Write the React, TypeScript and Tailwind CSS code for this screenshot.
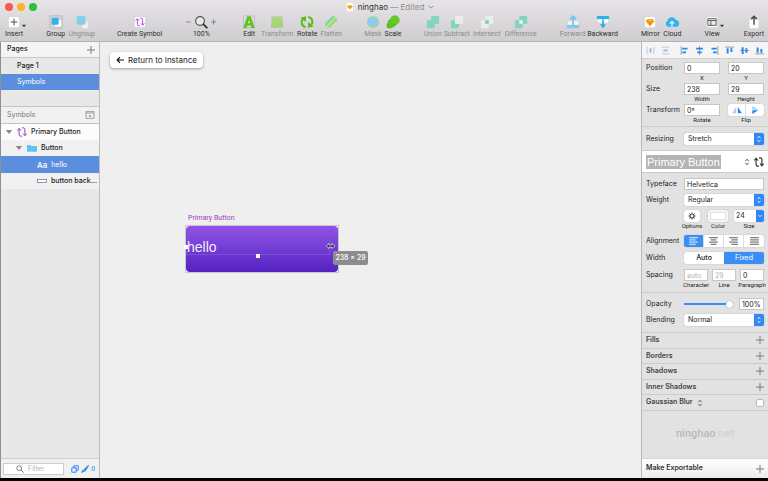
import type { ReactNode } from "react";

type Tool = { name: string; width: string; icon: ReactNode; muted?: boolean };

const swap = (
  <>
    <path d="M4.500 4.500V11q0 2 2 2H8M2.300 6.200l2.200-2.700 2.200 2.700" />
    <path d="M11.500 11.500V5q0-2-2-2H8M9.300 9.800l2.200 2.700 2.200-2.700" />
  </>
);

const TileIcon = ({ children }: { children: ReactNode }) => (
  <svg viewBox="0 0 16 16" className="h-3 w-3">
    <rect x="0.500" y="0.500" width="15" height="15" rx="2.500" fill="#fff" stroke="#cfcdd0" />
    {children}
  </svg>
);

const InsertIcon = () => (
  <div className="relative">
    <TileIcon>
      <path d="M8 3.500v9M3.500 8h9" stroke="#4a4a4a" strokeWidth="1.300" />
    </TileIcon>
    <svg viewBox="0 0 8 5" className="absolute top-2 left-3.5 h-1 w-1">
      <path d="M0 0h8L4 5z" fill="#333" />
    </svg>
  </div>
);

const GroupIcon = () => (
  <svg viewBox="0 0 16 16" className="h-3.5 w-3.5">
    <rect x="1" y="1" width="14" height="14" fill="#d6d4d6" stroke="#b0aeb1" strokeWidth="0.700" />
    <rect x="7" y="6" width="7" height="7" rx="1" fill="#fff" />
    <rect x="3" y="3" width="8" height="8" rx="1" fill="#35b1ea" />
  </svg>
);

const UngroupIcon = () => (
  <svg viewBox="0 0 16 16" className="h-3.5 w-3.5">
    <rect x="8" y="8" width="7" height="7" rx="1" fill="#eef1f1" />
    <rect x="2" y="1" width="10" height="10" rx="1.500" fill="#84cfe4" />
  </svg>
);

const SymbolIcon = () => (
  <TileIcon>
    <g fill="none" stroke="#b44be0" strokeWidth="1.300">
      {swap}
    </g>
  </TileIcon>
);

const ZoomIcon = () => (
  <svg viewBox="0 0 33 14" className="h-3.5 w-8">
    <path d="M1 7h5M27 7h5M29.500 4.500v5" stroke="#8c8a8d" strokeWidth="1.200" />
    <circle cx="15.500" cy="6" r="4.500" fill="#e9e7ea" stroke="#555" strokeWidth="1.200" />
    <path d="M19 9.400l3.500 3.400" stroke="#333" strokeWidth="2" strokeLinecap="round" />
  </svg>
);

const EditIcon = () => (
  <svg viewBox="0 0 16 16" className="h-3.5 w-3.5">
    <rect x="1.500" y="1" width="13" height="13.500" fill="none" stroke="#b5b3b6" strokeWidth="0.700" />
    <path d="M1.500 15L6 1.500h4L14.500 15h-3.500l-.9-3H5.900L5 15zM6.700 9.500h2.600L8 5z" fill="#5cc41c" />
  </svg>
);

const TransformIcon = () => (
  <svg viewBox="0 0 16 16" className="h-3.5 w-3.5">
    <path d="M3 2.500h10L15 14H1z" fill="#a5d872" />
    <path d="M2 2h12M1 14h14M2 2v12M14 2v12" stroke="#a6c490" strokeWidth="0.700" />
  </svg>
);

const RotateIcon = () => (
  <svg viewBox="0 0 18 16" className="h-3.5 w-4">
    <path d="M7.500 14C3 13 1.500 8 4 5M10.500 2c4.500 1 6 6 3.500 9" fill="none" stroke="#57bf1b" strokeWidth="2.500" />
    <path d="M1.500 3L8 1.500 7.500 8zM16.500 13L10 14.500 10.500 8z" fill="#57bf1b" />
  </svg>
);

const FlattenIcon = () => (
  <svg viewBox="0 0 16 16" className="h-3.5 w-3.5">
    <path d="M5 11L11 5" stroke="#9bdc75" strokeWidth="7.500" strokeLinecap="round" />
    <path d="M3.500 9.500L9.500 3.500" stroke="#83d3bd" strokeWidth="3" strokeLinecap="round" />
    <path d="M2 14L14 2" stroke="#e5f3dc" strokeWidth="0.800" />
  </svg>
);

const MaskIcon = () => (
  <svg viewBox="0 0 16 16" className="h-3.5 w-3.5">
    <circle cx="8" cy="8" r="7" fill="#a5d791" />
    <rect x="2.500" y="3" width="11" height="9.500" rx="1" fill="#8acdf0" />
  </svg>
);

const ScaleIcon = () => (
  <svg viewBox="0 0 16 16" className="h-3.5 w-3.5">
    <circle cx="4" cy="12" r="3.300" fill="#57c31b" />
    <circle cx="6.500" cy="9.500" r="4.500" fill="#5dc71f" stroke="#46a816" strokeWidth="0.500" />
    <circle cx="10" cy="6" r="5.200" fill="#64cc25" stroke="#46a816" strokeWidth="0.500" />
  </svg>
);

const BoolIcon = ({ back, front, mid }: { back: string; front: string; mid: string }) => (
  <svg viewBox="0 0 16 16" className="h-3.5 w-3.5">
    <rect x="1" y="6" width="9" height="9" rx="1" fill={back} />
    <rect x="6" y="1" width="9" height="9" rx="1" fill={front} />
    <rect x="6" y="6" width="4" height="4" fill={mid} />
  </svg>
);

const ForwardIcon = () => (
  <svg viewBox="0 0 16 16" className="h-3.5 w-3.5">
    <rect x="2" y="7" width="12" height="4" rx="0.500" fill="#f5f5f5" />
    <rect x="1" y="11.500" width="14" height="3.500" rx="0.500" fill="#7fcbea" />
    <path d="M8 12V3.500M4.500 5L8 1.500 11.500 5" fill="none" stroke="#6fc6ea" strokeWidth="2" />
  </svg>
);

const BackwardIcon = () => (
  <svg viewBox="0 0 16 16" className="h-3.5 w-3.5">
    <rect x="1" y="1" width="14" height="3.500" rx="0.500" fill="#28b4ee" />
    <rect x="2" y="5" width="12" height="3.500" rx="0.500" fill="#fdfdfd" />
    <path d="M8 5v6" stroke="#28b4ee" strokeWidth="2" />
    <path d="M4.500 10.500h7L8 15z" fill="#28a8e8" />
  </svg>
);

const Gem = () => (
  <>
    <path d="M4.500 4h7L14 7l-6 6.500L2 7z" fill="#f9a11b" />
    <path d="M5.500 7L8 4l2.500 3z" fill="#fdc14a" />
    <path d="M5.500 7h5L8 13.500z" fill="#f08c12" />
  </>
);

const CloudIcon = () => (
  <svg viewBox="0 0 20 16" className="h-3.5 w-4">
    <path d="M5 14a4 4 0 01-.5-7.500A5.500 5.500 0 0115 5.500 4.300 4.300 0 0115.500 14z" fill="#2fb4f2" />
    <path d="M10 14V8M7.300 10L10 7.300 12.700 10" fill="none" stroke="#fff" strokeWidth="1.400" />
  </svg>
);

const ViewIcon = () => (
  <div className="relative">
    <TileIcon>
      <path d="M2.500 3.500h11v9h-11zM2.500 6h11M6.500 6v6.500" fill="#e9e9e9" stroke="#555" strokeWidth="1.200" />
    </TileIcon>
    <svg viewBox="0 0 8 5" className="absolute top-2 left-3.5 h-1 w-1">
      <path d="M0 0h8L4 5z" fill="#333" />
    </svg>
  </div>
);

const ExportIcon = () => (
  <svg viewBox="0 0 16 16" className="h-3.5 w-3.5">
    <rect x="2.500" y="5" width="11" height="10.500" rx="1" fill="#fff" stroke="#cfcdd0" strokeWidth="0.500" />
    <path d="M8 11V1.500M4.800 4.500L8 1.300l3.200 3.200" fill="none" stroke="#444" strokeWidth="1.600" />
  </svg>
);

const toolGroups: Tool[][] = [
  [{ name: "Insert", width: "w-4", icon: <InsertIcon /> }],
  [
    { name: "Group", width: "w-5", icon: <GroupIcon /> },
    { name: "Ungroup", width: "w-6", icon: <UngroupIcon />, muted: true },
  ],
  [{ name: "Create Symbol", width: "w-11", icon: <SymbolIcon /> }],
  [{ name: "100%", width: "w-8", icon: <ZoomIcon /> }],
  [
    { name: "Edit", width: "w-4", icon: <EditIcon /> },
    { name: "Transform", width: "w-8", icon: <TransformIcon />, muted: true },
    { name: "Rotate", width: "w-5", icon: <RotateIcon /> },
    { name: "Flatten", width: "w-5", icon: <FlattenIcon />, muted: true },
  ],
  [
    { name: "Mask", width: "w-4", icon: <MaskIcon />, muted: true },
    { name: "Scale", width: "w-4", icon: <ScaleIcon /> },
  ],
  [
    { name: "Union", width: "w-4", icon: <BoolIcon back="#80d5bb" front="#80d5bb" mid="#80d5bb" />, muted: true },
    { name: "Subtract", width: "w-6", icon: <BoolIcon back="#80d5bb" front="#edeced" mid="#edeced" />, muted: true },
    { name: "Intersect", width: "w-7", icon: <BoolIcon back="#edeced" front="#edeced" mid="#6cceb0" />, muted: true },
    { name: "Difference", width: "w-8", icon: <BoolIcon back="#80d5bb" front="#80d5bb" mid="#f3f3f3" />, muted: true },
  ],
  [
    { name: "Forward", width: "w-6", icon: <ForwardIcon />, muted: true },
    { name: "Backward", width: "w-7", icon: <BackwardIcon /> },
  ],
  [
    { name: "Mirror", width: "w-5", icon: <TileIcon><Gem /></TileIcon> },
    { name: "Cloud", width: "w-4", icon: <CloudIcon /> },
  ],
  [{ name: "View", width: "w-4", icon: <ViewIcon /> }],
  [{ name: "Export", width: "w-5", icon: <ExportIcon /> }],
];

const alignIcons = [
  { name: "Distribute horizontally", d: "M1.500 1v10M10.500 1v10", bar: "M6 3v6", muted: true },
  { name: "Distribute vertically", d: "M1 1.500h10M1 10.500h10", bar: "M3 6h6", muted: true },
  { name: "Align left", d: "M1.500 0v12", bar: "M3 3.500h7M3 8.500h5" },
  { name: "Align center", d: "M6 0v12", bar: "M1.500 3.500h9M3 8.500h6" },
  { name: "Align right", d: "M10.500 0v12", bar: "M2 3.500h7M4 8.500h5" },
  { name: "Align top", d: "M0 1.500h12", bar: "M3.500 3v7M8.500 3v5" },
  { name: "Align middle", d: "M0 6h12", bar: "M3.500 1.500v9M8.500 3v6" },
  { name: "Align bottom", d: "M0 10.500h12", bar: "M3.500 2v7M8.500 4v5" },
];

const textAligns = [
  { name: "Left", d: "M0 1h12M0 4h9M0 7h12M0 10h9" },
  { name: "Center", d: "M0 1h12M2 4h8M0 7h12M2 10h8" },
  { name: "Right", d: "M0 1h12M3 4h9M0 7h12M3 10h9" },
  { name: "Justify", d: "M0 1h12M0 4h12M0 7h12M0 10h12" },
];

const styleSections = ["Fills", "Borders", "Shadows", "Inner Shadows"];

function Plus() {
  return (
    <svg viewBox="0 0 8 8" className="h-2 w-2">
      <path d="M4 0v8M0 4h8" stroke="#7d7d7d" strokeWidth="1" />
    </svg>
  );
}

function Toolbar() {
  return (
    <header className="flex h-[42px] shrink-0 flex-col border-b border-[#b5b3b6] bg-linear-to-b from-[#e6e4e7] to-[#cfcdd0]">
      <div className="grid h-3.5 grid-cols-[1fr_auto_1fr] items-center px-1">
        <div className="flex gap-1 pl-px">
          <button aria-label="Close" className="h-2 w-2 rounded-full bg-[#fb564f]" />
          <button aria-label="Minimize" className="h-2 w-2 rounded-full bg-[#fdb324]" />
          <button aria-label="Zoom window" className="h-2 w-2 rounded-full bg-[#2bc13c]" />
        </div>
        <h1 className="flex items-center gap-1 pl-3 text-[8px] leading-3 text-[#333]">
          <svg viewBox="0 0 14 16" className="h-2.5 w-2">
            <path d="M1 0h9l3 3v13H1z" fill="#fff" stroke="#ccc" strokeWidth="0.500" />
            <path d="M4 5h6l2 2.500L7 12.500 2 7.500z" fill="#f9a11b" />
          </svg>
          <span>
            ninghao <span className="text-[#8f8d90]">— Edited</span>
          </span>
          <svg viewBox="0 0 8 5" className="h-1 w-1.5">
            <path d="M1 1l3 3 3-3" fill="none" stroke="#8f8d90" strokeWidth="1.300" />
          </svg>
        </h1>
      </div>
      <nav className="flex flex-1 justify-between pr-1 pl-1.5 font-['Roboto',sans-serif]">
        {toolGroups.map((group) => (
          <div key={group[0].name} className="flex gap-1">
            {group.map((tool) => (
              <button
                key={tool.name}
                className={`${tool.width} flex flex-col items-center ${tool.muted ? "text-[#8c8a8d]" : "text-[#2e2e2e]"}`}
              >
                <span className="flex h-4 items-center">{tool.icon}</span>
                <span className="text-[7px] leading-[9px] whitespace-nowrap">{tool.name}</span>
              </button>
            ))}
          </div>
        ))}
      </nav>
    </header>
  );
}

function Sidebar() {
  return (
    <aside className="flex w-[100px] shrink-0 flex-col border-r border-l border-r-[#bdbdbd] border-l-[#8f8f8f] bg-[#e8e8e8] text-[7px] text-[#222]">
      <div className="flex h-4 items-center justify-between border-b border-[#cacaca] bg-[#f4f4f4] pr-1 pl-1.5">
        <h2 className="font-medium">Pages</h2>
        <button aria-label="Add page"><Plus /></button>
      </div>
      <button className="h-4 pl-4 text-left font-medium">Page 1</button>
      <button className="h-4 bg-[#5b8fde] pl-4 text-left text-white">Symbols</button>
      <div className="h-4" />
      <div className="flex h-[18px] items-center justify-between border-y border-[#c4c4c4] bg-[#f1f1f1] pr-1 pl-1.5 text-[#777]">
        <h2>Symbols</h2>
        <svg viewBox="0 0 16 14" className="h-2 w-2.5">
          <path d="M1 1h14v12H1zM1 3.500h14" fill="none" stroke="#888" strokeWidth="1.300" />
          <path d="M5.500 10h5L8 6.500z" fill="#888" />
        </svg>
      </div>
      <button className="flex h-4 items-center gap-1 bg-[#fcfcfc] pl-1 font-medium">
        <svg viewBox="0 0 8 5" className="h-1 w-2">
          <path d="M0 0h8L4 5z" fill="#888" />
        </svg>
        <svg viewBox="2 2 12 12" className="h-2.5 w-2.5" fill="none" stroke="#8c3fb5" strokeWidth="1.200">
          {swap}
        </svg>
        Primary Button
      </button>
      <button className="flex h-4 items-center gap-1 bg-[#f1f1f1] pl-3.5 font-medium">
        <svg viewBox="0 0 8 5" className="h-1 w-2">
          <path d="M0 0h8L4 5z" fill="#888" />
        </svg>
        <svg viewBox="0 0 12 9" className="h-2 w-2.5">
          <path d="M0 1h4l1 1h7v7H0z" fill="#5ec4f5" />
        </svg>
        Button
      </button>
      <button className="flex h-[17px] items-center gap-1 bg-[#5b8fde] pl-9 text-white">
        <span className="text-[8px] leading-3 font-medium">Aa</span>
        <span className="leading-3">hello</span>
      </button>
      <button className="flex h-4 items-center gap-1 bg-[#f1f1f1] pl-9 font-medium">
        <svg viewBox="0 0 10 4" className="h-1 w-2.5">
          <rect x="0.500" y="0.500" width="9" height="3" fill="#fff" stroke="#8f6f9a" strokeWidth="0.800" />
        </svg>
        button back...
      </button>
      <div className="mt-auto flex h-5 items-center border-t border-[#d0d0d0] bg-[#f0f0f0] pr-1 pl-0.5">
        <label className="flex h-3 w-[61px] items-center gap-1 border border-[#ccc] bg-white pl-3">
          <svg viewBox="0 0 10 10" className="h-2 w-2 shrink-0">
            <circle cx="4" cy="4" r="3" fill="none" stroke="#666" />
            <path d="M6 6l3.500 3.500" stroke="#666" strokeWidth="1.200" />
          </svg>
          <input aria-label="Filter" placeholder="Filter" className="h-2.5 w-8 text-[7px] leading-2.5 outline-none placeholder:text-[#b5b5b5]" />
        </label>
        <div className="ml-auto flex items-center gap-0.5 text-[6px] font-medium text-[#2b82f0]">
          <svg viewBox="0 0 10 10" className="h-2 w-2" fill="none" stroke="currentColor" strokeWidth="1.200">
            <path d="M1 3.500h5.500V9H1zM3.500 3.500V1H9v5.500H6.500" />
          </svg>
          <svg viewBox="0 0 10 10" className="h-2 w-2">
            <path d="M0 10l2-4 3 2zM3 6l6-6 1 1-4.500 7z" fill="currentColor" />
          </svg>
          0
        </div>
      </div>
    </aside>
  );
}

function Canvas() {
  return (
    <main className="relative min-w-0 flex-1 bg-[#efefef]">
      <button className="mt-2.5 ml-2.5 flex h-4 items-center gap-1 rounded-sm bg-white px-1.5 text-[8px] text-[#222] shadow-[0_1px_3px_rgba(0,0,0,0.35)]">
        <svg viewBox="0 0 10 8" className="h-2 w-2" fill="none" stroke="#111" strokeWidth="1.500">
          <path d="M10 4H1.500M5 0.500L1.500 4 5 7.500" />
        </svg>
        Return to Instance
      </button>
      {/* artboard */}
      <div className="absolute top-[172px] left-[88px] font-['Roboto',sans-serif] text-[7px] leading-[9px] text-[#9a45bd]">
        Primary Button
      </div>
      <div className="absolute top-[184px] left-[86px] h-[46px] w-[152px] bg-white outline outline-[#c9c4d0]">
        <div className="h-full rounded bg-linear-to-b from-[#9253e7] to-[#5520c0]" />
        <div className="absolute top-[11px] left-0 h-[18px] w-[144px] border border-[#7d4fd8] font-['Liberation_Sans',sans-serif] text-[14px] leading-[18px] text-[#f3eefc]">
          hello
        </div>
        <span className="absolute top-[19px] -left-0.5 h-1 w-1 bg-white" />
        <span className="absolute top-7 left-[70px] h-1 w-1 bg-white" />
        <svg viewBox="0 0 18 12" className="absolute top-[17px] left-[140px] h-[6px] w-[9px]">
          <path d="M0 6l6-5v3h6V1l6 5-6 5V8H6v3z" fill="#333" stroke="#fff" strokeWidth="1.200" />
        </svg>
      </div>
      <div className="absolute top-[209px] left-[233px] flex h-[14px] w-[35px] items-center justify-center rounded-xs bg-[#8c8b8f] text-[7px] font-medium text-white">
        238 × 29
      </div>
    </main>
  );
}

function Row({ label, htmlFor, children }: { label: string; htmlFor?: string; children: ReactNode }) {
  return (
    <div className="grid grid-cols-[38px_minmax(0,1fr)] items-start">
      <label htmlFor={htmlFor} className="leading-3">{label}</label>
      {children}
    </div>
  );
}

function Caption({ children }: { children: ReactNode }) {
  return (
    <span className="self-center font-['Roboto',sans-serif] text-[6px] leading-2 whitespace-nowrap">{children}</span>
  );
}

function Field({ id, value, caption, muted }: { id: string; value: string; caption?: string; muted?: boolean }) {
  return (
    <div className="flex min-w-0 flex-1 flex-col">
      <input
        id={id}
        aria-label={caption ?? id}
        defaultValue={value}
        className={`h-3 w-full border border-[#c6c6c6] bg-white px-0.5 text-[7px] leading-2 ${muted ? "text-[#b3b3b3]" : "text-[#222]"}`}
      />
      {caption && <Caption>{caption}</Caption>}
    </div>
  );
}

function Dropdown({ id, value }: { id: string; value: string }) {
  return (
    <div className="flex h-3 overflow-hidden rounded-xs bg-white shadow-[0_0_1px_rgba(0,0,0,0.5)]">
      <select id={id} className="min-w-0 flex-1 appearance-none pl-1 text-[7px] leading-3">
        <option>{value}</option>
      </select>
      <span className="flex w-2.5 items-center justify-center bg-[#2f86f6]">
        <svg viewBox="0 0 6 10" className="h-2 w-1.5" fill="none" stroke="#fff">
          <path d="M1 4l2-2.500L5 4M1 6l2 2.500L5 6" />
        </svg>
      </span>
    </div>
  );
}

function Inspector() {
  return (
    <aside className="flex w-[127px] shrink-0 flex-col border-l border-[#b8b8b8] bg-[#e2e2e2] text-[7px] text-[#222]">
      <div className="flex h-[17px] items-center justify-between border-b border-[#cfcfcf] bg-[#f5f5f5] pr-1 pl-1">
        {alignIcons.map((icon, i) => (
          <button key={icon.name} aria-label={icon.name} className={`${icon.muted ? "opacity-50" : ""} ${i === 2 ? "ml-1" : ""}`}>
            <svg viewBox="0 0 12 12" className="h-[9px] w-[9px]">
              <path d={icon.d} stroke="#777" strokeWidth="0.900" />
              <path d={icon.bar} stroke="#2585ef" strokeWidth="2.600" />
            </svg>
          </button>
        ))}
      </div>

      <section className="flex flex-col gap-px border-b border-[#cbcbcb] pt-[3px] pr-1 pb-0.5 pl-1">
        <Row label="Position" htmlFor="x">
          <div className="flex gap-2">
            <Field id="x" value="0" caption="X" />
            <Field id="y" value="20" caption="Y" />
          </div>
        </Row>
        <Row label="Size" htmlFor="width">
          <div className="flex gap-2">
            <Field id="width" value="238" caption="Width" />
            <Field id="height" value="29" caption="Height" />
          </div>
        </Row>
        <Row label="Transform" htmlFor="rotate">
          <div className="flex gap-2">
            <Field id="rotate" value="0º" caption="Rotate" />
            <div className="flex flex-1 flex-col">
              <div className="grid h-3 grid-cols-2 divide-x divide-[#ddd] rounded-xs bg-white shadow-[0_0_1px_rgba(0,0,0,0.4)]">
                <button aria-label="Flip horizontally" className="flex items-center justify-center">
                  <svg viewBox="0 0 12 10" className="h-2 w-2.5">
                    <path d="M5 1v8H0z" fill="#a8cdf5" />
                    <path d="M7 1v8h5z" fill="#2585ef" />
                  </svg>
                </button>
                <button aria-label="Flip vertically" className="flex items-center justify-center">
                  <svg viewBox="0 0 12 12" className="h-2 w-2.5">
                    <path d="M2 5.500V0l9 5.500z" fill="#a8cdf5" />
                    <path d="M2 6.500V12l9-5.500z" fill="#2585ef" />
                  </svg>
                </button>
              </div>
              <Caption>Flip</Caption>
            </div>
          </div>
        </Row>
      </section>

      <section className="border-b border-[#cbcbcb] px-1 pt-1.5 pb-[5px]">
        <Row label="Resizing" htmlFor="resizing">
          <Dropdown id="resizing" value="Stretch" />
        </Row>
      </section>

      <div className="flex h-[22px] items-center border-b border-[#cbcbcb] bg-white pr-1 pl-1">
        <input
          aria-label="Shared text style"
          defaultValue="Primary Button"
          className="h-[14px] w-[75px] bg-[#b4b4b4] pl-px font-['Liberation_Sans',sans-serif] text-[11px] leading-[14px] text-white"
        />
        <svg viewBox="0 0 6 10" className="ml-auto h-2 w-1.5" fill="none" stroke="#333">
          <path d="M1 4l2-2.500L5 4M1 6l2 2.500L5 6" />
        </svg>
        <button aria-label="Sync style" className="ml-1">
          <svg viewBox="2 2 12 12" className="h-2.5 w-2.5" fill="none" stroke="#333" strokeWidth="1.400">
            {swap}
          </svg>
        </button>
      </div>

      <section className="flex flex-col gap-1 border-b border-[#cbcbcb] px-1 pt-[5px] pb-[3px]">
        <Row label="Typeface" htmlFor="typeface">
          <Field id="typeface" value="Helvetica" />
        </Row>
        <Row label="Weight" htmlFor="weight">
          <Dropdown id="weight" value="Regular" />
        </Row>
        <div className="flex justify-between pl-9">
          <div className="flex w-5 flex-col items-center">
            <button aria-label="Text options" className="flex h-3 w-4 items-center justify-center rounded-xs bg-white shadow-[0_0_1px_rgba(0,0,0,0.4)]">
              <svg viewBox="0 0 10 10" className="h-2 w-2" fill="none" stroke="#444">
                <circle cx="5" cy="5" r="2.500" strokeWidth="1.500" />
                <path d="M5 0.500v9M0.500 5h9M1.800 1.800l6.400 6.400M8.200 1.800L1.800 8.200" strokeWidth="1.100" strokeDasharray="1.500 6" />
              </svg>
            </button>
            <Caption>Options</Caption>
          </div>
          <div className="flex w-5 flex-col items-center">
            <button aria-label="Text color" className="flex h-3 w-5 rounded-xs bg-[#f5f5f5] p-0.5 shadow-[0_0_1px_rgba(0,0,0,0.4)]">
              <span className="h-full w-full border border-[#e2e2e2] bg-white" />
            </button>
            <Caption>Color</Caption>
          </div>
          <div className="flex w-[30px] flex-col items-center">
            <span className="flex h-3 w-full overflow-hidden rounded-xs bg-white shadow-[0_0_1px_rgba(0,0,0,0.4)]">
              <input aria-label="Font size" defaultValue="24" className="min-w-0 flex-1 pl-0.5 text-[7px]" />
              <span className="flex w-2 items-center justify-center bg-[#2f86f6]">
                <svg viewBox="0 0 8 5" className="h-1 w-1">
                  <path d="M0 0l4 4 4-4" fill="none" stroke="#fff" strokeWidth="1.500" />
                </svg>
              </span>
            </span>
            <Caption>Size</Caption>
          </div>
        </div>
        <div className="mt-px flex flex-col gap-[5px]">
          <Row label="Alignment">
            <div className="grid h-3 grid-cols-4 divide-x divide-[#ddd] overflow-hidden rounded-xs bg-white shadow-[0_0_1px_rgba(0,0,0,0.4)]">
              {textAligns.map((a, i) => (
                <button
                  key={a.name}
                  aria-label={a.name}
                  className={`flex items-center justify-center ${i === 0 ? "bg-[#3b8ef5] text-white" : "text-[#444]"}`}
                >
                  <svg viewBox="0 0 12 11" className="h-2 w-[9px]" stroke="currentColor" strokeWidth="1.200">
                    <path d={a.d} />
                  </svg>
                </button>
              ))}
            </div>
          </Row>
          <Row label="Width">
            <div className="grid h-3 grid-cols-2 overflow-hidden rounded-xs bg-white text-center leading-3 shadow-[0_0_1px_rgba(0,0,0,0.4)]">
              <button className="font-medium">Auto</button>
              <button className="bg-[#3b8ef5] text-white">Fixed</button>
            </div>
          </Row>
          <Row label="Spacing" htmlFor="character">
            <div className="flex gap-1">
              <Field id="character" value="auto" caption="Character" muted />
              <Field id="line" value="29" caption="Line" muted />
              <Field id="paragraph" value="0" caption="Paragraph" />
            </div>
          </Row>
        </div>
      </section>

      <section className="flex flex-col gap-1 border-b border-[#cbcbcb] px-1 pt-[5px] pb-1.5">
        <Row label="Opacity" htmlFor="opacity">
          <div className="flex items-center gap-1.5">
            <input
              id="opacity"
              type="range"
              defaultValue={100}
              className="h-2 w-0 min-w-0 flex-1 appearance-none bg-[linear-gradient(#3b8ef5,#3b8ef5)] bg-[length:100%_2px] bg-center bg-no-repeat [&::-webkit-slider-thumb]:h-[7px] [&::-webkit-slider-thumb]:w-[7px] [&::-webkit-slider-thumb]:appearance-none [&::-webkit-slider-thumb]:rounded-full [&::-webkit-slider-thumb]:bg-white [&::-webkit-slider-thumb]:shadow-[0_0_1px_rgba(0,0,0,0.6)]"
            />
            <input aria-label="Opacity value" defaultValue="100%" className="h-3 w-[25px] border border-[#c6c6c6] bg-white px-0.5 text-[7px]" />
          </div>
        </Row>
        <Row label="Blending" htmlFor="blending">
          <Dropdown id="blending" value="Normal" />
        </Row>
      </section>

      <div className="flex h-[78px] flex-col divide-y divide-[#cbcbcb] border-b border-[#cbcbcb] font-semibold text-[#444]">
        {styleSections.map((name) => (
          <div key={name} className="flex flex-1 items-center justify-between px-1">
            <h3>{name}</h3>
            <button aria-label={`Add ${name}`}><Plus /></button>
          </div>
        ))}
        <div className="flex flex-1 items-center gap-1 px-1">
          <label htmlFor="blur">Gaussian Blur</label>
          <svg viewBox="0 0 6 10" className="h-2 w-1.5" fill="none" stroke="#444">
            <path d="M1 4l2-2.500L5 4M1 6l2 2.500L5 6" />
          </svg>
          <input id="blur" type="checkbox" className="ml-auto h-2 w-2 appearance-none rounded-xs border border-[#bbb] bg-white" />
        </div>
      </div>

      <div className="flex flex-1 items-center justify-center font-['Roboto',sans-serif] text-[11px] text-[#b9b9b9]">
        <span className="font-medium">ninghao</span>
        <span className="text-[#cfcfcf]">.net</span>
      </div>
      <div className="flex h-5 items-center justify-between border-t border-[#d6d6d6] bg-linear-to-b from-white to-[#ececec] px-1 font-semibold text-[#333]">
        <h3>Make Exportable</h3>
        <button aria-label="Make exportable"><Plus /></button>
      </div>
    </aside>
  );
}

export default function App() {
  return (
    <div className="flex h-screen flex-col border-b-3 border-black bg-[#efefef] font-['Inter',sans-serif]">
      <Toolbar />
      <div className="flex min-h-0 flex-1">
        <Sidebar />
        <Canvas />
        <Inspector />
      </div>
    </div>
  );
}
